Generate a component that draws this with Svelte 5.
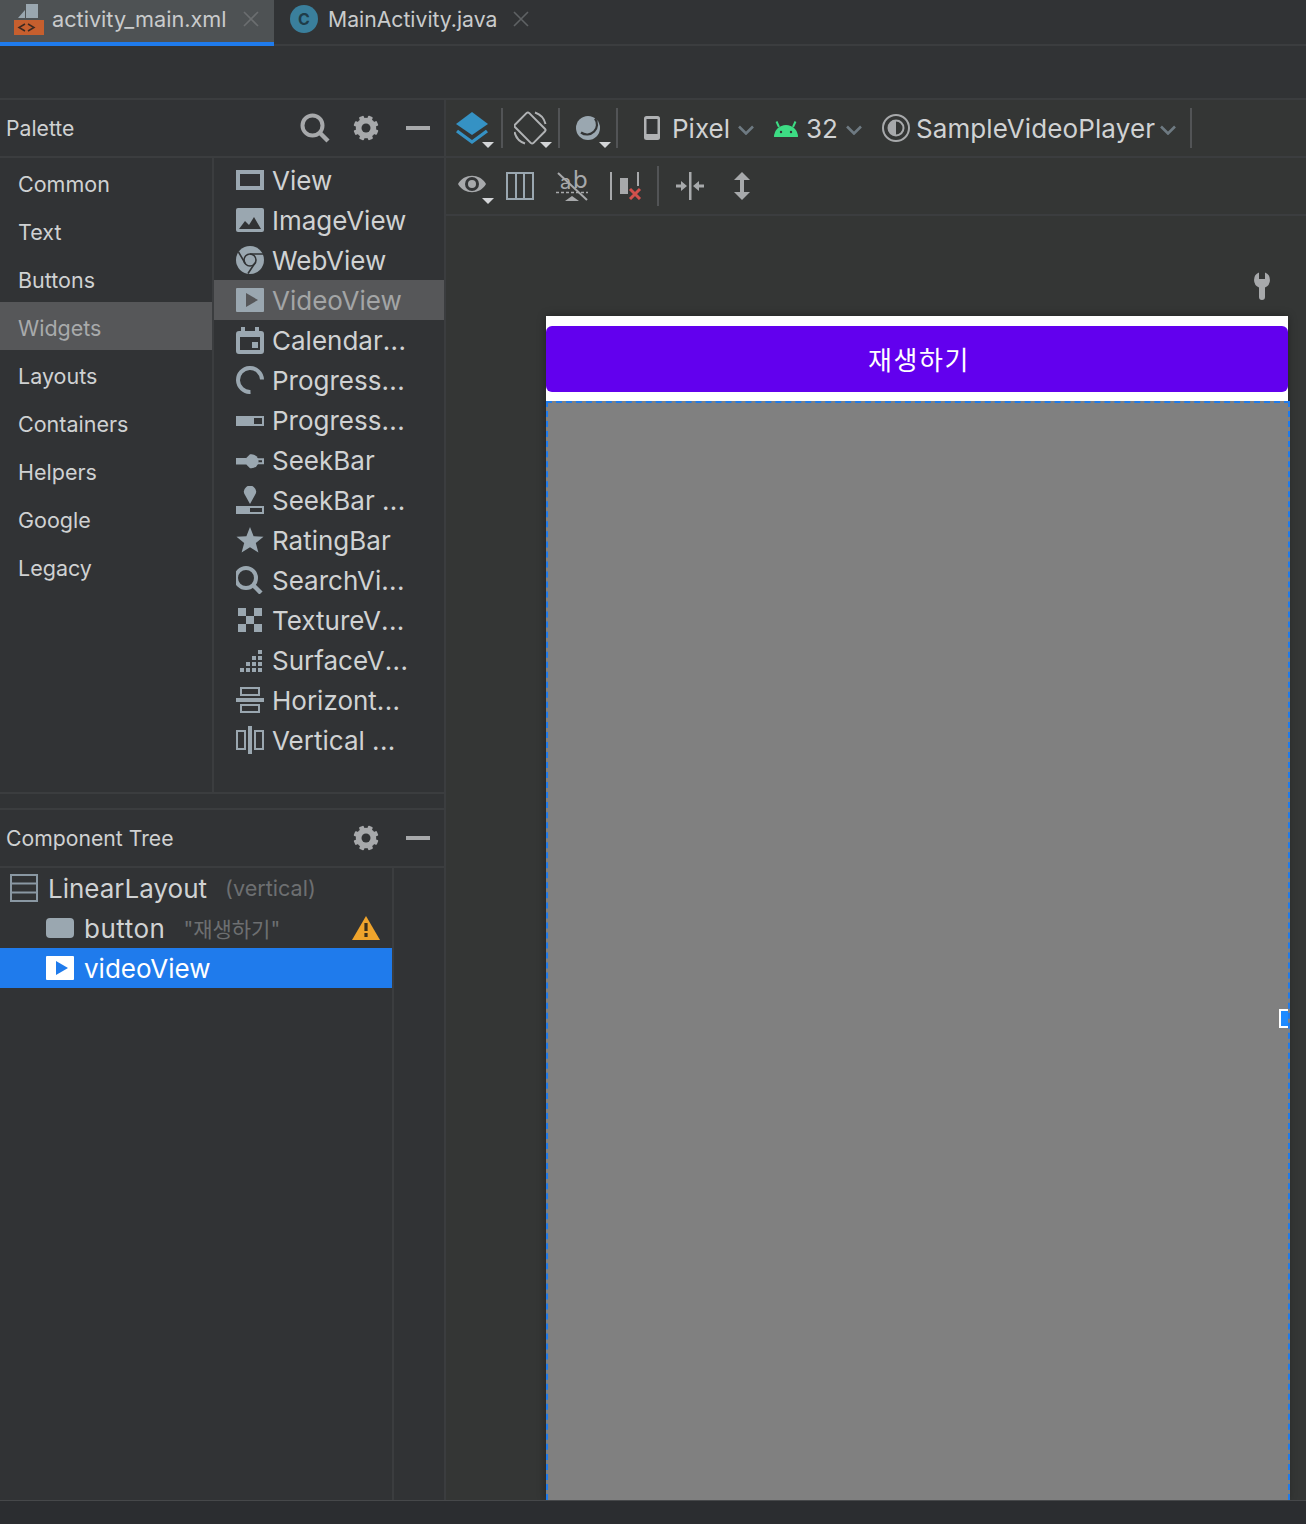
<script>
  const cats = ['Common','Text','Buttons','Widgets','Layouts','Containers','Helpers','Google','Legacy'];
  const items = [
    ['view','View',''],['image','ImageView',''],['web','WebView',''],['video','VideoView',''],['cal','Calendar','...'],
    ['spin','Progress','...'],['bar','Progress','...'],['seek','SeekBar',''],['seekd','SeekBar ','...'],['star','RatingBar',''],
    ['search','SearchVi','...'],['tex','TextureV','...'],['surf','SurfaceV','...'],['hz','Horizont','...'],['vt','Vertical ','...']
  ];
  const teeth = [0,45,90,135];
  const dots = [[0,3],[1,3],[2,3],[3,3],[1,2],[2,2],[3,2],[2,1],[3,1],[3,0]];
</script>

{#snippet gear()}
  <svg class="hicon" width="28" height="28" viewBox="0 0 28 28">
    <circle cx="14" cy="14" r="7.5" fill="none" stroke="#a7a9ab" stroke-width="5.5"/>
    {#each teeth as t}
      <rect x="11.500" y="1.500" width="5" height="25" rx="1" fill="#a7a9ab" transform="rotate({t + 22} 14 14)"/>
    {/each}
    <circle cx="14" cy="14" r="4.500" fill="#313335"/>
  </svg>
{/snippet}

{#snippet minus()}
  <svg class="hicon minus" width="24" height="28" viewBox="0 0 24 28"><rect y="12" width="24" height="4" fill="#a7a9ab"/></svg>
{/snippet}

{#snippet caret(x, y)}
  <path d="M{x} {y}h12l-6 6z" fill="#d4d6d8"/>
{/snippet}

{#snippet chev()}
  <svg class="chev" width="16" height="10" viewBox="0 0 16 10"><path d="M1 1.500l7 7 7-7" fill="none" stroke="#6e7a82" stroke-width="2.600"/></svg>
{/snippet}

{#snippet sep()}<span class="sep"></span>{/snippet}

{#snippet icon(k)}
  <svg class="picon" width="28" height="28" viewBox="0 0 28 28">
    {#if k === 'view'}
      <rect x="2" y="6" width="24" height="16" fill="none" stroke="#9aa7b0" stroke-width="4"/>
    {:else if k === 'image'}
      <rect y="2" width="28" height="24" rx="2" fill="#9aa7b0"/>
      <path d="M3 23l6-8 4 4 5-8 7 12z" fill="#313335"/>
    {:else if k === 'web'}
      <circle cx="14" cy="14" r="14" fill="#9aa7b0"/>
      <circle cx="14" cy="14" r="6" fill="none" stroke="#313335" stroke-width="1.600"/>
      <path d="M14 8h13M9 17L2.500 6M19 17l-7 10.500" fill="none" stroke="#313335" stroke-width="1.600"/>
    {:else if k === 'video'}
      <rect y="2" width="28" height="24" rx="1" fill="#9aa7b0"/>
      <path d="M10 7l12 7-12 7z" fill="#565759"/>
    {:else if k === 'cal'}
      <path d="M5 1h4v4h10V1h4v4h2a3 3 0 0 1 3 3v17a3 3 0 0 1-3 3H3a3 3 0 0 1-3-3V8a3 3 0 0 1 3-3h2z" fill="#9aa7b0"/>
      <rect x="4" y="11" width="20" height="13" fill="#313335"/>
      <rect x="16" y="16" width="6" height="6" fill="#9aa7b0"/>
    {:else if k === 'spin'}
      <path d="M26 13.500A12 12 0 1 0 14.500 26" fill="none" stroke="#9aa7b0" stroke-width="4"/>
    {:else if k === 'bar'}
      <rect y="10" width="18" height="10" fill="#9aa7b0"/>
      <rect x="17" y="11" width="10" height="8" fill="none" stroke="#9aa7b0" stroke-width="2"/>
    {:else if k === 'seek'}
      <rect y="12" width="10" height="6.500" fill="#9aa7b0"/>
      <path d="M7 15.200l7-7h1.500a7 7 0 0 1 0 14H14z" fill="#9aa7b0"/>
      <path d="M20 13.200h7v4h-7" fill="none" stroke="#9aa7b0" stroke-width="2"/>
    {:else if k === 'seekd'}
      <path d="M14 18l-5-9a6 6 0 1 1 10 0z" fill="#9aa7b0"/>
      <rect y="20" width="28" height="8" fill="#9aa7b0"/>
      <rect x="14" y="22" width="12" height="4" fill="#313335"/>
    {:else if k === 'star'}
      <path d="M14 1l3.600 9.200 9.900.6-7.700 6.200 2.600 9.600L14 21.200 5.600 26.600l2.600-9.600L.5 10.800l9.900-.6z" fill="#9aa7b0"/>
    {:else if k === 'search'}
      <g transform="translate(-2 0)">
        <circle cx="12" cy="12" r="10" fill="none" stroke="#9aa7b0" stroke-width="4"/>
        <path d="M19 19l8 8" stroke="#9aa7b0" stroke-width="4.400"/>
      </g>
    {:else if k === 'tex'}
      <path d="M2 2h8v8H2zM18 2h8v8h-8zM10 10h8v8h-8zM2 18h8v8H2zM18 18h8v8h-8z" fill="#9aa7b0"/>
    {:else if k === 'surf'}
      {#each dots as d}
        <rect x={4 + d[0] * 6} y={4 + d[1] * 6} width="4" height="4" fill="#9aa7b0"/>
      {/each}
    {:else if k === 'hz'}
      <rect x="5" y="2" width="18" height="7" fill="none" stroke="#9aa7b0" stroke-width="2"/>
      <rect y="12" width="28" height="4" fill="#9aa7b0"/>
      <rect x="5" y="19" width="18" height="7" fill="none" stroke="#9aa7b0" stroke-width="2"/>
    {:else if k === 'vt'}
      <rect x="1" y="5" width="8" height="18" fill="none" stroke="#9aa7b0" stroke-width="2"/>
      <rect x="12" width="4" height="28" fill="#9aa7b0"/>
      <rect x="19" y="5" width="8" height="18" fill="none" stroke="#9aa7b0" stroke-width="2"/>
    {/if}
  </svg>
{/snippet}

<div class="page">
  <div class="tabs">
    <div class="tab active">
      <svg width="30" height="32" viewBox="0 0 30 32" class="ficon">
        <path d="M4 15L11 7v8zM12 1h12v14H12z" fill="#9aa7b0"/>
        <rect y="17" width="30" height="15" fill="#c65f2e"/>
        <path d="M11 21l-6 3.500 6 3.500M14 21l6 3.500-6 3.500" fill="none" stroke="#3b2a22" stroke-width="1.500"/>
      </svg>
      <span class="tname">activity_main.xml</span>
      <svg class="close" width="16" height="16" viewBox="0 0 16 16"><path d="M1 1l14 14M15 1L1 15" stroke="#6b6e70" stroke-width="1.600"/></svg>
    </div>
    <div class="tab second">
      <span class="cicon">C</span>
      <span class="tname">MainActivity.java</span>
      <svg class="close" width="16" height="16" viewBox="0 0 16 16"><path d="M1 1l14 14M15 1L1 15" stroke="#5f6264" stroke-width="1.600"/></svg>
    </div>
  </div>
  <div class="band"></div>

  <div class="main">
    <div class="left">
      <div class="phead">
        <span class="ptitle">Palette</span>
        <svg class="hicon search" width="30" height="30" viewBox="0 0 30 30">
          <circle cx="12.500" cy="12.500" r="10" fill="none" stroke="#a7a9ab" stroke-width="4"/>
          <path d="M20 20l8 8" stroke="#a7a9ab" stroke-width="4.400"/>
        </svg>
        {@render gear()}
        {@render minus()}
      </div>
      <div class="palette">
        <div class="cats">
          {#each cats as c}
            <div class="cat" class:on={c === 'Widgets'}>{c}</div>
          {/each}
        </div>
        <div class="items">
          {#each items as it}
            <div class="item" class:on={it[0] === 'video'}>
              {@render icon(it[0])}
              <span class="iname">{it[1]}<span class="dots">{it[2]}</span></span>
            </div>
          {/each}
        </div>
      </div>
      <div class="gap"></div>
      <div class="phead">
        <span class="ptitle">Component Tree</span>
        {@render gear()}
        {@render minus()}
      </div>
      <div class="treewrap">
        <div class="tree">
          <div class="row root">
            <svg width="28" height="28" viewBox="0 0 28 28">
              <rect x="1" y="1" width="26" height="26" fill="none" stroke="#8a98a3" stroke-width="2"/>
              <path d="M1 9.500h26M1 18.500h26" stroke="#8a98a3" stroke-width="2"/>
            </svg>
            <span class="rname">LinearLayout</span>
            <span class="rsub">(vertical)</span>
          </div>
          <div class="row child">
            <svg width="28" height="28" viewBox="0 0 28 28"><rect y="4" width="28" height="20" rx="4" fill="#9aa7b0"/></svg>
            <span class="rname btnname">button</span>
            <span class="rsub ko">"재생하기"</span>
            <svg class="warn" width="28" height="24" viewBox="0 0 28 24">
              <path d="M14 0l14 24H0z" fill="#efa42c"/>
              <path d="M12.400 7h3.200v8h-3.200zM12.400 17h3.200v4h-3.200z" fill="#3a2f1c"/>
            </svg>
          </div>
          <div class="row child sel">
            <svg width="28" height="28" viewBox="0 0 28 28">
              <rect y="2" width="28" height="24" rx="1" fill="#fff"/>
              <path d="M10 7l12 7-12 7z" fill="#1f7bec"/>
            </svg>
            <span class="rname">videoView</span>
          </div>
        </div>
      </div>
    </div>

    <div class="right">
      <div class="tb tb1">
        <svg width="38" height="40" viewBox="0 0 38 40">
          <path d="M16 4l16 12-16 11L0 16z" fill="#3592c4"/>
          <path d="M1 23l15 11 15-11" fill="none" stroke="#3592c4" stroke-width="3.400"/>
          {@render caret(26, 34)}
        </svg>
        {@render sep()}
        <svg class="m11" width="38" height="40" viewBox="0 0 38 40">
          <rect x="6" y="7" width="20" height="26" rx="2" transform="rotate(-45 16 20)" fill="none" stroke="#b0b2b4" stroke-width="2"/>
          <path d="M21 4.500A16 16 0 0 1 31.500 16M11 35.500A16 16 0 0 1 .5 24" fill="none" stroke="#b0b2b4" stroke-width="2"/>
          {@render caret(26, 34)}
        </svg>
        {@render sep()}
        <svg class="m14" width="38" height="40" viewBox="0 0 38 40">
          <circle cx="14" cy="20" r="12" fill="#9aa7b0"/>
          <path d="M21 10.500a10 10 0 0 1-14 14" fill="none" stroke="#333536" stroke-width="2.200"/>
          {@render caret(25, 34)}
        </svg>
        {@render sep()}
        <svg class="phone" width="16" height="24" viewBox="0 0 16 24">
          <rect width="16" height="24" rx="2.500" fill="#b0b2b4"/>
          <rect x="2.500" y="3" width="11" height="15" fill="#333536"/>
        </svg>
        <span class="tbt pixel">Pixel</span>
        {@render chev()}
        <svg class="droid" width="24" height="18" viewBox="0 0 24 18">
          <path d="M0 18a12 12 0 0 1 24 0z" fill="#3ddc84"/>
          <path d="M5 8L2.500 2.500M19 8l2.500-5.500" stroke="#3ddc84" stroke-width="2"/>
          <circle cx="7" cy="13" r="1.200" fill="#333536"/><circle cx="17" cy="13" r="1.200" fill="#333536"/>
        </svg>
        <span class="tbt n32">32</span>
        {@render chev()}
        <svg class="theme" width="28" height="28" viewBox="0 0 28 28">
          <circle cx="14" cy="14" r="13" fill="none" stroke="#a7a9ab" stroke-width="2"/>
          <circle cx="14" cy="14" r="7.500" fill="none" stroke="#a7a9ab" stroke-width="2"/>
          <path d="M14 6.500a7.500 7.500 0 0 0 0 15z" fill="#a7a9ab"/>
        </svg>
        <span class="tbt app">SampleVideoPlayer</span>
        {@render chev()}
        <span class="sep last"></span>
      </div>
      <div class="tb tb2">
        <svg class="ib2" width="38" height="40" viewBox="0 0 38 40">
          <path d="M0 14C6 3 22 3 28 14 22 25 6 25 0 14z" fill="#a7a9ab"/>
          <circle cx="14" cy="14" r="7" fill="#333536"/><circle cx="14" cy="14" r="4" fill="#a7a9ab"/>
          {@render caret(24, 28)}
        </svg>
        <svg class="cols" width="28" height="28" viewBox="0 0 28 28">
          <rect x="1" y="1" width="26" height="26" fill="none" stroke="#9aa7b0" stroke-width="2"/>
          <path d="M10 1v26M18 1v26" stroke="#9aa7b0" stroke-width="2"/>
        </svg>
        <svg class="ab" width="34" height="36" viewBox="0 0 34 36">
          <text x="4" y="21" class="abt a1">a</text><text x="17" y="20" class="abt b1">b</text>
          <path d="M0 24.500h32" stroke="#a7a9ab" stroke-width="1.500" stroke-dasharray="3 2"/>
          <path d="M9 33l7-5 7 5z" fill="#a7a9ab"/>
          <path d="M2 5l29 27" stroke="#a7a9ab" stroke-width="2"/>
        </svg>
        <svg class="err" width="32" height="28" viewBox="0 0 32 28">
          <rect y="0" width="2" height="28" fill="#a7a9ab"/>
          <rect x="10" y="6" width="8" height="16" fill="#a7a9ab"/>
          <rect x="27" y="0" width="2" height="14" fill="#a7a9ab"/>
          <path d="M20 17l10 10M30 17L20 27" stroke="#d2504c" stroke-width="3"/>
        </svg>
        <span class="sep s2"></span>
        <svg class="shr" width="28" height="28" viewBox="0 0 28 28">
          <rect x="13" width="2.500" height="28" fill="#a7a9ab"/>
          <path d="M0 12.500h5V9l6 5-6 5v-3.500H0zM28 12.500h-5V9l-6 5 6 5v-3.500h5z" fill="#a7a9ab"/>
        </svg>
        <svg class="exp" width="16" height="28" viewBox="0 0 16 28">
          <path d="M8 0l8 8h-6v12h6l-8 8-8-8h6V8H0z" fill="#a7a9ab"/>
        </svg>
      </div>
      <div class="canvas">
        <div class="wrenchrow">
          <svg width="16" height="28" viewBox="0 0 16 28">
            <path d="M5 .6A8 8 0 0 0 5 15.400V25a3 3 0 0 0 6 0V15.400A8 8 0 0 0 11 .6V7H5z" fill="#a7a9ab"/>
          </svg>
        </div>
        <div class="device">
          <div class="btn">재생하기</div>
          <div class="vid">
            <span class="handle"></span>
          </div>
        </div>
      </div>
    </div>
  </div>
  <div class="status"></div>
</div>

<style>
  :global(body) { background: #313335; }
  .page { width: 1306px; height: 1524px; display: flex; flex-direction: column; overflow: hidden; background: #313335; color: #d0d2d3; font-family: Inter, "Noto Sans CJK KR", sans-serif; }
  svg { display: block; flex: none; }

  .tabs { height: 46px; display: flex; flex: none; box-shadow: inset 0 -2px 0 #3b3d3f; }
  .tab { height: 46px; display: flex; align-items: center; box-sizing: border-box; padding-bottom: 8px; }
  .active { width: 274px; background: #4e5254; border-bottom: 4px solid #1f7bec; padding-left: 14px; padding-bottom: 4px; }
  .second { padding-left: 16px; }
  .ficon { margin-right: 8px; }
  .tname { font-size: 21.2px; color: #c9cbcc; white-space: nowrap; }
  .active .tname { font-size: 21.7px; }
  .close { margin-left: 16px; }
  .cicon { width: 28px; height: 28px; border-radius: 50%; background: #3a7f9c; color: #1f3c49; font: 700 16px/28px Inter, sans-serif; text-align: center; margin-right: 10px; }

  .band { height: 52px; flex: none; border-bottom: 2px solid #3b3d3f; }
  .main { flex: 1; display: flex; min-height: 0; }

  .left { width: 444px; flex: none; border-right: 2px solid #3b3d3f; display: flex; flex-direction: column; }
  .phead { height: 56px; flex: none; display: flex; align-items: center; padding: 0 14px 0 6px; border-bottom: 2px solid #3b3d3f; }
  .ptitle { font-size: 21.2px; color: #cfd1d2; flex: 1; }
  .hicon { margin-left: 24px; }
  .hicon.minus { margin-left: 26px; }
  .hicon.search { margin-left: 0; }
  .hicon.search + .hicon { margin-left: 22px; }

  .palette { height: 634px; display: flex; flex: none; border-bottom: 2px solid #3b3d3f; }
  .cats { width: 212px; flex: none; border-right: 2px solid #3b3d3f; }
  .cat { height: 48px; line-height: 52px; padding-left: 18px; font-size: 21.5px; color: #cfd1d2; }
  .cat.on { background: #565759; color: #a8aaab; }
  .items { flex: 1; padding-top: 2px; }
  .item { height: 40px; display: flex; align-items: center; padding-left: 22px; font-size: 26px; color: #d0d2d3; white-space: pre; }
  .iname { margin-left: 8px; }
  .dots { letter-spacing: .4px; }
  .item.on { background: #565759; color: #a3a5a6; }

  .gap { height: 14px; flex: none; border-bottom: 2px solid #3b3d3f; }

  .treewrap { flex: 1; display: flex; }
  .tree { width: 392px; flex: none; border-right: 2px solid #3b3d3f; }
  .row { height: 40px; display: flex; align-items: center; }
  .root { padding-left: 10px; }
  .child { padding-left: 46px; }
  .rname { font-size: 26px; color: #d0d2d3; margin-left: 10px; }
  .btnname { letter-spacing: .5px; }
  .rsub { font-size: 21.6px; color: #6d6f71; margin-left: 18px; }
  .rsub.ko { font-size: 21px; flex: 1; }
  .warn { margin-right: 12px; }
  .sel { background: #1f7bec; }
  .sel .rname { color: #fff; }

  .right { flex: 1; min-width: 0; display: flex; flex-direction: column; background: #343635; }
  .tb { height: 56px; flex: none; display: flex; align-items: center; border-bottom: 2px solid #3b3d3f; }
  .tb1 { padding-left: 10px; }
  .tb2 { padding-left: 12px; }
  .sep { width: 2px; height: 40px; background: #525456; margin-left: 7px; flex: none; }
  .m11 { margin-left: 11px; }
  .m14 { margin-left: 14px; }
  .m11 + .sep { margin-left: 6px; }
  .m14 + .sep { margin-left: 4px; }
  .phone { margin-left: 26px; }
  .tbt { font-size: 26px; color: #d0d2d3; white-space: nowrap; }
  .pixel { margin-left: 12px; }
  .chev { margin-left: 8px; margin-top: 4px; }
  .droid { margin-left: 20px; }
  .n32 { margin-left: 8px; }
  .theme { margin-left: 20px; }
  .app { margin-left: 6px; letter-spacing: .12px; }
  .app + .chev { margin-left: 5px; }
  .sep.last { margin-left: 14px; }

  .ib2 { margin-top: 8px; }
  .cols { margin-left: 10px; }
  .ab { margin-left: 22px; }
  .abt { font-family: Inter, sans-serif; fill: #a7a9ab; }
  .a1 { font-size: 20px; }
  .b1 { font-size: 24px; }
  .err { margin-left: 20px; }
  .sep.s2 { margin-left: 15px; }
  .shr { margin-left: 17px; }
  .exp { margin-left: 30px; }

  .canvas { flex: 1; min-height: 0; overflow: hidden; padding: 56px 0 0 100px; display: flex; flex-direction: column; }
  .wrenchrow { height: 28px; flex: none; display: flex; justify-content: flex-end; padding-right: 36px; margin-bottom: 16px; }
  .device { width: 742px; flex: 1; min-height: 0; background: #fff; padding-top: 10px; display: flex; flex-direction: column; box-shadow: 0 0 8px rgba(0,0,0,.35); box-sizing: border-box; }
  .btn { height: 66px; flex: none; background: #6200ee; border-radius: 6px; color: #fff; font: 26px/66px "Noto Sans CJK KR", sans-serif; letter-spacing: 1.6px; text-indent: 4px; text-align: center; margin-bottom: 9px; }
  .vid { flex: 1; margin-right: -2px; background: #808080; border: 2px dashed #1f7bec; border-bottom: 0; position: relative; }
  .handle { position: absolute; right: 0; top: 606px; width: 7px; height: 15px; background: #1f8bff; border: 2px solid #fff; border-right: 0; }
  .status { height: 24px; flex: none; background: #2b2d30; box-sizing: border-box; border-top: 1px solid #46484a; }
</style>
